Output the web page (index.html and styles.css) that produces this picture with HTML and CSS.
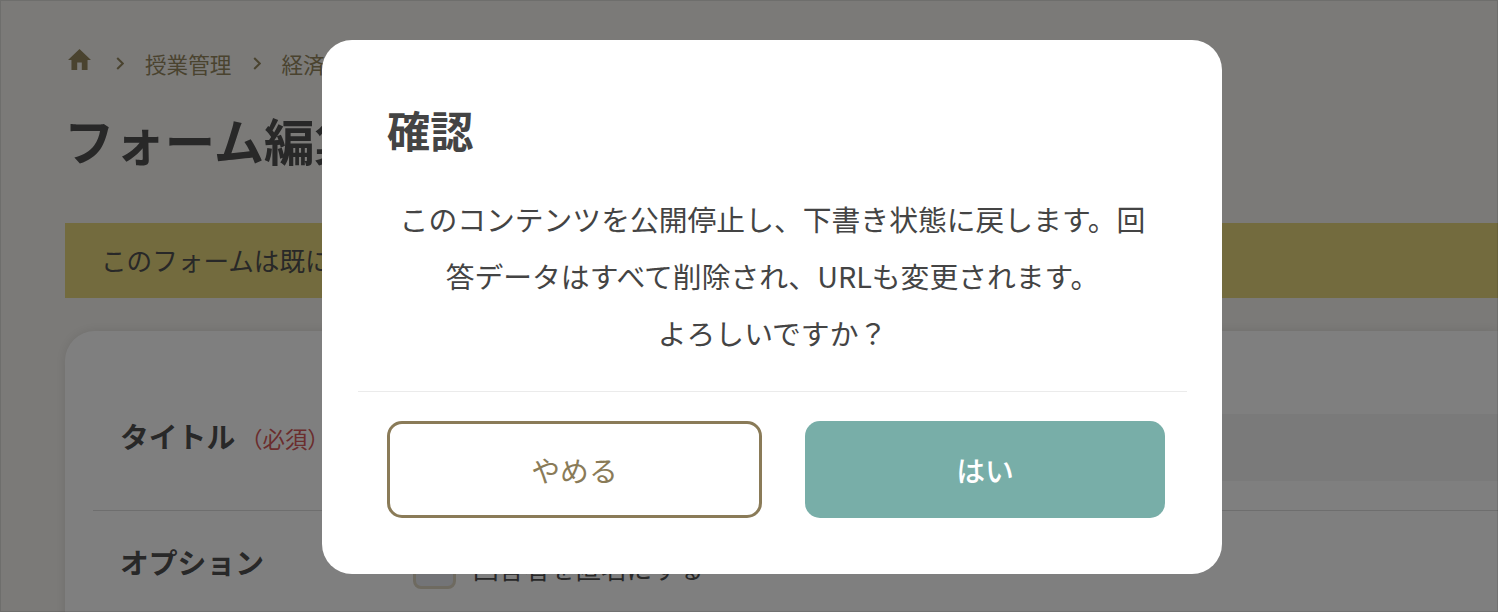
FILE: index.html
```html
<!DOCTYPE html>
<html lang="ja">
<head>
    <meta charset="UTF-8">
    <meta name="viewport" content="width=device-width, initial-scale=1.0">
    <title>フォーム編集</title>
    <link rel="stylesheet" href="styles.css">
</head>
<body>
    <div class="page">
        <nav class="breadcrumb">
            <svg class="home-icon" viewBox="2 3 20 17" preserveAspectRatio="none"><path d="M10 20v-6h4v6h5v-8h3L12 3 2 12h3v8z"/></svg>
            <svg class="chevron" viewBox="0 0 8 14"><path d="M1 1l6 6-6 6"/></svg>
            <span>授業管理</span>
            <svg class="chevron" viewBox="0 0 8 14"><path d="M1 1l6 6-6 6"/></svg>
            <span>経済学入門</span>
        </nav>

        <h1 class="page-title">フォーム編集</h1>

        <div class="notice">このフォームは既に公開済み</div>

        <div class="card">
            <div class="form-row row-title">
                <div class="row-label">タイトル<span class="required">（必須）</span></div>
                <div class="text-input"></div>
            </div>
            <div class="form-row row-option">
                <div class="row-label">オプション</div>
                <div class="check-item">
                    <span class="checkbox"></span>
                    <span>回答者を匿名にする</span>
                </div>
            </div>
        </div>
    </div>

    <div class="overlay">
        <div class="modal">
            <h2 class="modal-title">確認</h2>
            <p class="modal-body">このコンテンツを公開停止し、下書き状態に戻します。回<br>答データはすべて削除され、URLも変更されます。<br>よろしいですか？</p>
            <div class="modal-footer">
                <button class="btn btn-cancel">やめる</button>
                <button class="btn btn-ok">はい</button>
            </div>
        </div>
    </div>
</body>
</html>
```

FILE: styles.css
```css
html, body {
    margin: 0;
    height: 100%;
    overflow: hidden;
}
body {
    font-family: "Noto Sans CJK JP", "Noto Sans", sans-serif;
    color: #505050;
    background-color: #f7f5f1;
}

.page {
    padding: 45px 0 0 65px;
}

.breadcrumb {
    display: flex;
    align-items: center;
    height: 36px;
    font-size: 21.6px;
    color: #94875f;
}
.home-icon {
    width: 23px;
    height: 21px;
    margin: -7px 3px 0 3px;
    fill: #94875f;
}
.chevron {
    width: 8px;
    height: 13px;
    margin: 0 21px 0 22px;
    fill: none;
    stroke: #94875f;
    stroke-width: 2.2;
}
.chevron + span + .chevron {
    margin-right: 20px;
}

.page-title {
    margin: 23px 0 0 -1px;
    font-size: 50.4px;
    line-height: 72px;
    font-weight: 700;
}

.notice {
    margin-top: 47px;
    height: 75px;
    padding-left: 36px;
    line-height: 73px;
    font-size: 25.6px;
    background-color: #e6d67c;
}

.card {
    margin-top: 33px;
    height: 300px;
    padding: 0 0 0 28px;
    background-color: #fff;
    border-radius: 30px 0 0 0;
    box-shadow: 0 0 12px rgba(0, 0, 0, 0.1);
}

.form-row {
    display: flex;
    align-items: flex-start;
    box-sizing: border-box;
}
.row-title {
    height: 180px;
    padding-top: 83px;
    border-bottom: 1px solid #dcdcdc;
}
.row-option {
    padding-top: 29px;
}
.row-label {
    width: 320px;
    margin-top: -1px;
    padding-left: 27px;
    box-sizing: border-box;
    font-size: 28.8px;
    line-height: 46px;
    font-weight: 700;
    flex-shrink: 0;
}
.required {
    margin-left: 5px;
    font-size: 22.4px;
    font-weight: 400;
    color: #d65a5a;
}
.text-input {
    flex: 1;
    height: 67px;
    background-color: #f5f5f5;
}
.check-item {
    display: flex;
    align-items: center;
    gap: 17px;
    margin-top: 6px;
    font-size: 25.6px;
}
.checkbox {
    display: block;
    width: 37px;
    height: 37px;
    background-color: #e6e8ee;
    border: 3px solid #dcd4c0;
    border-radius: 8px;
}

.overlay {
    position: fixed;
    top: 0;
    left: 0;
    right: 0;
    bottom: 0;
    display: flex;
    align-items: center;
    justify-content: center;
    background-color: rgba(0, 0, 0, 0.5);
    box-shadow: inset 0 0 0 1px rgba(0, 0, 0, 0.1);
}

.modal {
    width: 900px;
    height: 534px;
    margin: 2px 0 0 46px;
    box-sizing: border-box;
    padding-top: 55px;
    background-color: #fff;
    border-radius: 30px;
    color: #444;
}
.modal-title {
    margin: 0 0 0 65px;
    font-size: 43.2px;
    line-height: 68px;
    font-weight: 700;
}
.modal-body {
    margin: 27px 35px 0 36px;
    padding-bottom: 30px;
    border-bottom: 1px solid #ebebeb;
    text-align: center;
    font-size: 28.8px;
    line-height: 57px;
}
.modal-footer {
    display: flex;
    gap: 43px;
    padding: 29px 0 0 65px;
}
.btn {
    height: 97px;
    box-sizing: border-box;
    padding-top: 1px;
    font-family: inherit;
    font-size: 28.8px;
    border-radius: 15px;
}
.btn-cancel {
    width: 375px;
    color: #8a7b58;
    background-color: #fff;
    border: 3px solid #8a7b58;
}
.btn-ok {
    width: 360px;
    color: #fff;
    font-weight: 500;
    background-color: #78aea8;
    border: none;
}
```
